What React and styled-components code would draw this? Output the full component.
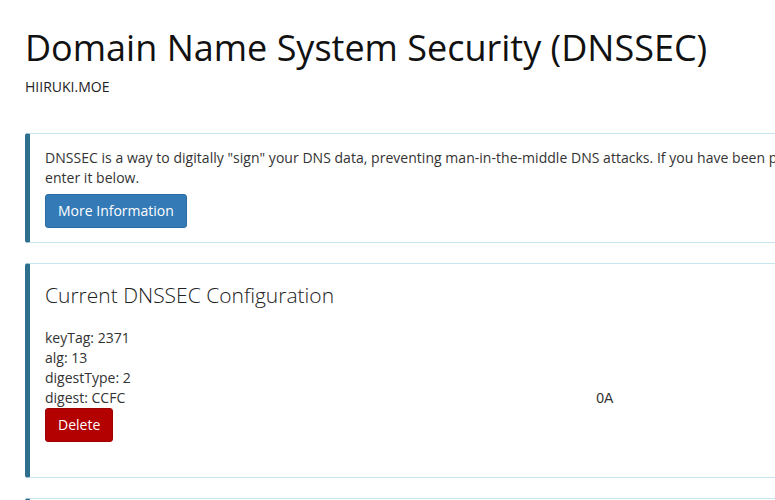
import React from "react";
import styled, { createGlobalStyle } from "styled-components";

const Global = createGlobalStyle`
  html, body { margin: 0; padding: 0; background: #fff; overflow: hidden; }
  body { font-family: "Open Sans", "Noto Sans", sans-serif; color: #333; font-size: 14px; line-height: 20px; }
`;

const Page = styled.div`
  padding: 0 25px;
  width: 1150px;
`;

const Header = styled.header`
  padding-top: 26px;
  margin-bottom: 37px;
`;

const Title = styled.h1`
  margin: 0;
  font-size: 36px;
  line-height: 44px;
  font-weight: 400;
  color: #111;
`;

const Subtitle = styled.div`
  margin-top: 8px;
  font-size: 14px;
  line-height: 18px;
  color: #222;
`;

const Callout = styled.section`
  border: 1px solid #c6e6ee;
  border-left: 5px solid #2f6f8e;
  border-radius: 3px;
  padding: 14px 15px 14px 15px;
  margin-bottom: 20px;
  min-height: ${(p) => p.$minHeight || "auto"};
  box-sizing: border-box;
`;

const Text = styled.p`
  margin: 0 0 6px;
  white-space: nowrap;
  letter-spacing: 0.03px;
`;

const Line = styled.p`
  margin: 0;
  white-space: nowrap;
  display: flex;
`;

const Tail = styled.span`
  font-family: "Liberation Sans", Arial, sans-serif;
  margin-left: ${(p) => p.$offset}px;
`;

const PanelTitle = styled.h3`
  margin: 4px 0 20px;
  font-size: 21px;
  line-height: 26px;
  font-weight: 300;
  color: #222;
`;

const Button = styled.button`
  font-family: inherit;
  font-size: 14px;
  line-height: 20px;
  padding: 6px 12px;
  color: #fff;
  border-radius: 3px;
  cursor: pointer;
  background: ${(p) => (p.$variant === "danger" ? "#b30000" : "#337ab7")};
  border: 1px solid ${(p) => (p.$variant === "danger" ? "#a00000" : "#2e6da4")};
`;

export default function App() {
  return (
    <>
      <Global />
      <Page>
        <Header>
          <Title>Domain Name System Security (DNSSEC)</Title>
          <Subtitle>HIIRUKI.MOE</Subtitle>
        </Header>
        <Callout>
          <Text>
            DNSSEC is a way to digitally "sign" your DNS data, preventing man-in-the-middle DNS attacks. If you have been provided a DS record from your DNS provider,
            <br />
            enter it below.
          </Text>
          <Button>More Information</Button>
        </Callout>
        <Callout $minHeight="215px">
          <PanelTitle>Current DNSSEC Configuration</PanelTitle>
          <Line>keyTag: 2371</Line>
          <Line>alg: 13</Line>
          <Line>digestType: 2</Line>
          <Line>
            digest: CCFC<Tail $offset={471}>0A</Tail>
          </Line>
          <Button $variant="danger">Delete</Button>
        </Callout>
        <Callout $minHeight="80px" />
      </Page>
    </>
  );
}
